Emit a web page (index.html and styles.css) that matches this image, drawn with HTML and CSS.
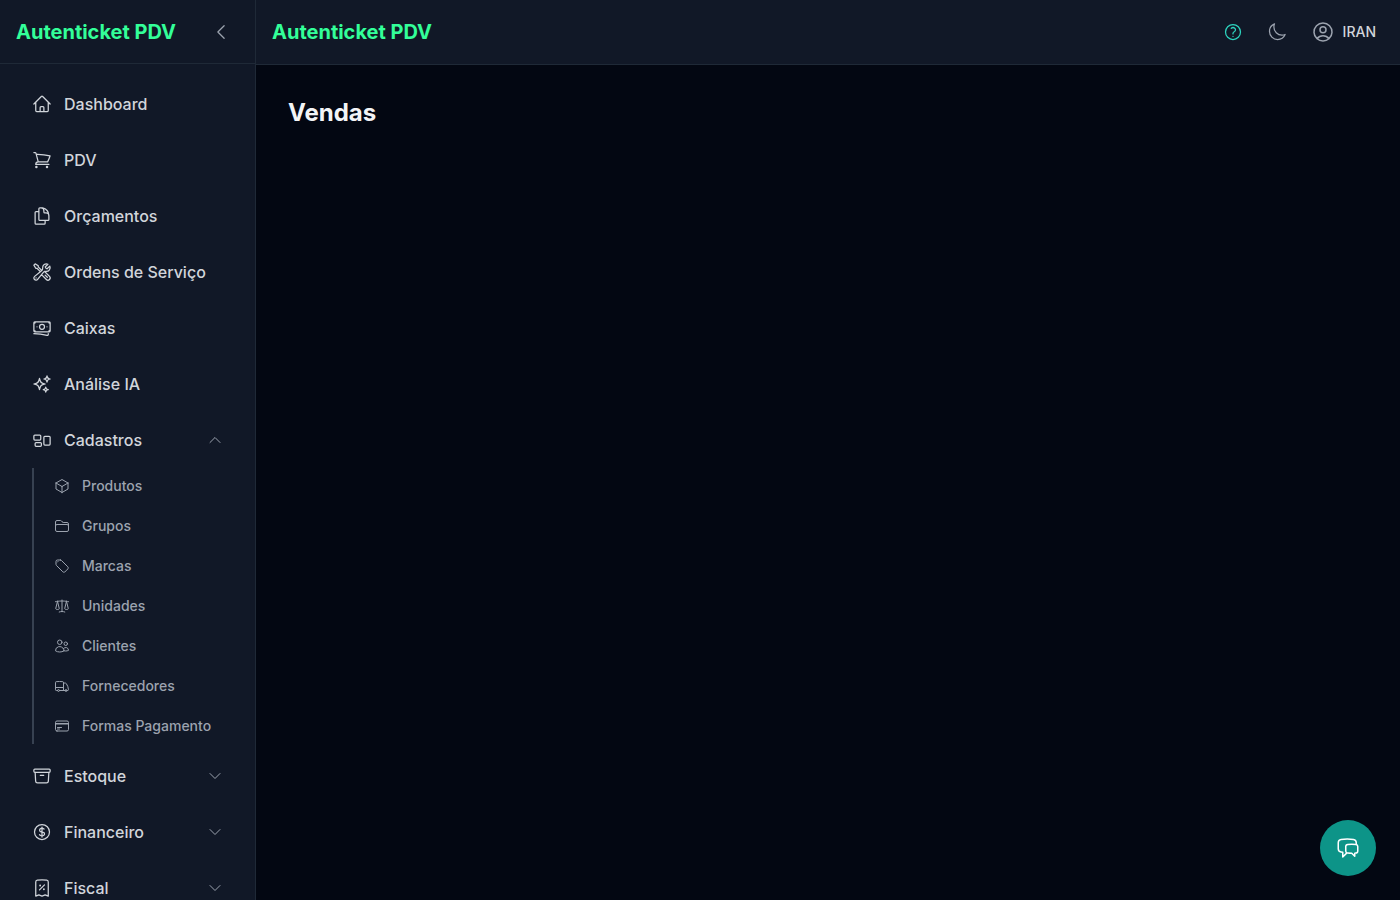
FILE: index.html
```html
<!DOCTYPE html>
<html lang="pt-BR">
<head>
    <meta charset="UTF-8">
    <meta name="viewport" content="width=device-width, initial-scale=1.0">
    <title>Vendas - Autenticket PDV</title>
    <link rel="stylesheet" href="styles.css">
</head>
<body>
    <div class="layout">
        <aside class="sidebar">
            <div class="sidebar-header">
                <a class="brand" href="#">Autenticket PDV</a>
                <button class="icon-button" type="button" aria-label="Recolher menu">
                    <svg class="icon" viewBox="0 0 24 24"><path d="M15.75 19.5 8.25 12l7.5-7.5"/></svg>
                </button>
            </div>
            <nav class="sidebar-nav">
                <a class="nav-item" href="#">
                    <svg class="icon" viewBox="0 0 24 24"><path d="m2.25 12 8.954-8.955c.44-.439 1.152-.439 1.591 0L21.75 12M4.5 9.75v10.125c0 .621.504 1.125 1.125 1.125H9.75v-4.875c0-.621.504-1.125 1.125-1.125h2.25c.621 0 1.125.504 1.125 1.125V21h4.125c.621 0 1.125-.504 1.125-1.125V9.75M8.25 21h8.25"/></svg>
                    <span>Dashboard</span>
                </a>
                <a class="nav-item" href="#">
                    <svg class="icon" viewBox="0 0 24 24"><path d="M2.25 3h1.386c.51 0 .955.343 1.087.835l.383 1.437M7.5 14.25a3 3 0 0 0-3 3h15.75m-12.75-3h11.218c1.121-2.3 2.1-4.684 2.924-7.138a60.114 60.114 0 0 0-16.536-1.84M7.5 14.25 5.106 5.272M6 20.25a.75.75 0 1 1-1.5 0 .75.75 0 0 1 1.5 0Zm12.75 0a.75.75 0 1 1-1.5 0 .75.75 0 0 1 1.5 0Z"/></svg>
                    <span>PDV</span>
                </a>
                <a class="nav-item" href="#">
                    <svg class="icon" viewBox="0 0 24 24"><path d="M15.75 17.25v3.375c0 .621-.504 1.125-1.125 1.125h-9.75a1.125 1.125 0 0 1-1.125-1.125V7.875c0-.621.504-1.125 1.125-1.125H6.75a9.06 9.06 0 0 1 1.5.124m7.5 10.376h3.375c.621 0 1.125-.504 1.125-1.125V11.25c0-4.46-3.243-8.161-7.5-8.876a9.06 9.06 0 0 0-1.5-.124H9.375c-.621 0-1.125.504-1.125 1.125v3.5m7.5 10.375H9.375a1.125 1.125 0 0 1-1.125-1.125v-9.25m12 6.625v-1.875a3.375 3.375 0 0 0-3.375-3.375h-1.5a1.125 1.125 0 0 1-1.125-1.125v-1.5a3.375 3.375 0 0 0-3.375-3.375H9.75"/></svg>
                    <span>Orçamentos</span>
                </a>
                <a class="nav-item" href="#">
                    <svg class="icon" viewBox="0 0 24 24"><path d="M11.42 15.17 17.25 21A2.652 2.652 0 0 0 21 17.25l-5.877-5.877M11.42 15.17l2.496-3.03c.317-.384.74-.626 1.208-.766M11.42 15.17l-4.655 5.653a2.548 2.548 0 1 1-3.586-3.586l6.837-5.63m5.108-.233c.55-.164 1.163-.188 1.743-.14a4.5 4.5 0 0 0 4.486-6.336l-3.276 3.277a3.004 3.004 0 0 1-2.25-2.25l3.276-3.276a4.5 4.5 0 0 0-6.336 4.486c.091 1.076-.071 2.264-.904 2.95l-.102.085m-1.745 1.437L5.909 7.5H4.5L2.25 3.75l1.5-1.5L7.5 4.5v1.409l4.26 4.26m-1.745 1.437 1.745-1.437m6.615 8.206L15.75 15.75M4.867 19.125h.008v.008h-.008v-.008Z"/></svg>
                    <span>Ordens de Serviço</span>
                </a>
                <a class="nav-item" href="#">
                    <svg class="icon" viewBox="0 0 24 24"><path d="M2.25 18.75a60.07 60.07 0 0 1 15.797 2.101c.727.198 1.453-.342 1.453-1.096V18.75M3.75 4.5v.75A.75.75 0 0 1 3 6h-.75m0 0v-.375c0-.621.504-1.125 1.125-1.125H20.25M2.25 6v9m18-10.5v.75c0 .414.336.75.75.75h.75m-1.5-1.5h.375c.621 0 1.125.504 1.125 1.125v9.75c0 .621-.504 1.125-1.125 1.125h-.375m1.5-1.5H21a.75.75 0 0 0-.75.75v.75m0 0H3.75m0 0h-.375a1.125 1.125 0 0 1-1.125-1.125V15m1.5 1.5v-.75A.75.75 0 0 0 3 15h-.75M15 10.5a3 3 0 1 1-6 0 3 3 0 0 1 6 0Zm3 0h.008v.008H18V10.5Zm-12 0h.008v.008H6V10.5Z"/></svg>
                    <span>Caixas</span>
                </a>
                <a class="nav-item" href="#">
                    <svg class="icon" viewBox="0 0 24 24"><path d="M9.813 15.904 9 18.75l-.813-2.846a4.5 4.5 0 0 0-3.09-3.09L2.25 12l2.846-.813a4.5 4.5 0 0 0 3.09-3.09L9 5.25l.813 2.846a4.5 4.5 0 0 0 3.09 3.09L15.75 12l-2.846.813a4.5 4.5 0 0 0-3.09 3.09ZM18.259 8.715 18 9.75l-.259-1.035a3.375 3.375 0 0 0-2.455-2.456L14.25 6l1.036-.259a3.375 3.375 0 0 0 2.455-2.456L18 2.25l.259 1.035a3.375 3.375 0 0 0 2.456 2.456L21.75 6l-1.035.259a3.375 3.375 0 0 0-2.456 2.456ZM16.894 20.567 16.5 21.75l-.394-1.183a2.25 2.25 0 0 0-1.423-1.423L13.5 18.75l1.183-.394a2.25 2.25 0 0 0 1.423-1.423l.394-1.183.394 1.183a2.25 2.25 0 0 0 1.423 1.423l1.183.394-1.183.394a2.25 2.25 0 0 0-1.423 1.423Z"/></svg>
                    <span>Análise IA</span>
                </a>
                <div class="nav-group">
                    <button class="nav-item" type="button" aria-expanded="true" aria-controls="menu-cadastros">
                        <svg class="icon" viewBox="0 0 24 24"><path d="M2.25 7.125C2.25 6.504 2.754 6 3.375 6h6c.621 0 1.125.504 1.125 1.125v3.75c0 .621-.504 1.125-1.125 1.125h-6a1.125 1.125 0 0 1-1.125-1.125v-3.75ZM14.25 8.625c0-.621.504-1.125 1.125-1.125h5.25c.621 0 1.125.504 1.125 1.125v8.25c0 .621-.504 1.125-1.125 1.125h-5.25a1.125 1.125 0 0 1-1.125-1.125v-8.25ZM3.75 16.125c0-.621.504-1.125 1.125-1.125h5.25c.621 0 1.125.504 1.125 1.125v2.25c0 .621-.504 1.125-1.125 1.125h-5.25a1.125 1.125 0 0 1-1.125-1.125v-2.25Z"/></svg>
                        <span>Cadastros</span>
                        <svg class="icon chevron" viewBox="0 0 24 24"><path d="m4.5 15.75 7.5-7.5 7.5 7.5"/></svg>
                    </button>
                    <div class="submenu" id="menu-cadastros">
                        <a class="submenu-item" href="#">
                            <svg class="icon" viewBox="0 0 24 24"><path d="m21 7.5-9-5.25L3 7.5m18 0-9 5.25m9-5.25v9l-9 5.25M3 7.5l9 5.25M3 7.5v9l9 5.25m0-9v9"/></svg>
                            <span>Produtos</span>
                        </a>
                        <a class="submenu-item" href="#">
                            <svg class="icon" viewBox="0 0 24 24"><path d="M2.25 12.75V12A2.25 2.25 0 0 1 4.5 9.75h15A2.25 2.25 0 0 1 21.75 12v.75m-8.69-6.44-2.12-2.12a1.5 1.5 0 0 0-1.061-.44H4.5A2.25 2.25 0 0 0 2.25 6v12a2.25 2.25 0 0 0 2.25 2.25h15A2.25 2.25 0 0 0 21.75 18V9a2.25 2.25 0 0 0-2.25-2.25h-5.379a1.5 1.5 0 0 1-1.06-.44Z"/></svg>
                            <span>Grupos</span>
                        </a>
                        <a class="submenu-item" href="#">
                            <svg class="icon" viewBox="0 0 24 24"><path d="M9.568 3H5.25A2.25 2.25 0 0 0 3 5.25v4.318c0 .597.237 1.17.659 1.591l9.581 9.581c.699.699 1.78.872 2.607.33a18.095 18.095 0 0 0 5.223-5.223c.542-.827.369-1.908-.33-2.607L11.16 3.66A2.25 2.25 0 0 0 9.568 3Z"/><path d="M6 6h.008v.008H6V6Z"/></svg>
                            <span>Marcas</span>
                        </a>
                        <a class="submenu-item" href="#">
                            <svg class="icon" viewBox="0 0 24 24"><path d="M12 3v17.25m0 0c-1.472 0-2.882.265-4.185.75M12 20.25c1.472 0 2.882.265 4.185.75M18.75 4.97A48.416 48.416 0 0 0 12 4.5c-2.291 0-4.545.16-6.75.47m13.5 0c1.01.143 2.01.317 3 .52m-3-.52 2.62 10.726c.122.499-.106 1.028-.589 1.202a5.988 5.988 0 0 1-2.031.352 5.988 5.988 0 0 1-2.031-.352c-.483-.174-.711-.703-.59-1.202L18.75 4.971Zm-16.5.52c.99-.203 1.99-.377 3-.52m0 0 2.62 10.726c.122.499-.106 1.028-.589 1.202a5.989 5.989 0 0 1-2.031.352 5.989 5.989 0 0 1-2.031-.352c-.483-.174-.711-.703-.59-1.202L5.25 4.971Z"/></svg>
                            <span>Unidades</span>
                        </a>
                        <a class="submenu-item" href="#">
                            <svg class="icon" viewBox="0 0 24 24"><path d="M15 19.128a9.38 9.38 0 0 0 2.625.372 9.337 9.337 0 0 0 4.121-.952 4.125 4.125 0 0 0-7.533-2.493M15 19.128v-.003c0-1.113-.285-2.16-.786-3.07M15 19.128v.106A12.318 12.318 0 0 1 8.624 21c-2.331 0-4.512-.645-6.374-1.766l-.001-.109a6.375 6.375 0 0 1 11.964-3.07M12 6.375a3.375 3.375 0 1 1-6.75 0 3.375 3.375 0 0 1 6.75 0Zm8.25 2.25a2.625 2.625 0 1 1-5.25 0 2.625 2.625 0 0 1 5.25 0Z"/></svg>
                            <span>Clientes</span>
                        </a>
                        <a class="submenu-item" href="#">
                            <svg class="icon" viewBox="0 0 24 24"><path d="M8.25 18.75a1.5 1.5 0 0 1-3 0m3 0a1.5 1.5 0 0 0-3 0m3 0h6m-9 0H3.375a1.125 1.125 0 0 1-1.125-1.125V14.25m17.25 4.5a1.5 1.5 0 0 1-3 0m3 0a1.5 1.5 0 0 0-3 0m3 0h1.125c.621 0 1.129-.504 1.09-1.124a17.902 17.902 0 0 0-3.213-9.193 2.056 2.056 0 0 0-1.58-.86H14.25M16.5 18.75h-2.25m0-11.177v-.958c0-.568-.422-1.048-.987-1.106a48.554 48.554 0 0 0-10.026 0 1.106 1.106 0 0 0-.987 1.106v7.635m12-6.677v6.677m0 4.5v-4.5m0 0h-12"/></svg>
                            <span>Fornecedores</span>
                        </a>
                        <a class="submenu-item" href="#">
                            <svg class="icon" viewBox="0 0 24 24"><path d="M2.25 8.25h19.5M2.25 9h19.5m-16.5 5.25h6m-6 2.25h3m-3.75 3h15a2.25 2.25 0 0 0 2.25-2.25V6.75A2.25 2.25 0 0 0 19.5 4.5h-15a2.25 2.25 0 0 0-2.25 2.25v10.5A2.25 2.25 0 0 0 4.5 19.5Z"/></svg>
                            <span>Formas Pagamento</span>
                        </a>
                    </div>
                </div>
                <button class="nav-item" type="button" aria-expanded="false">
                    <svg class="icon" viewBox="0 0 24 24"><path d="m20.25 7.5-.625 10.632a2.25 2.25 0 0 1-2.247 2.118H6.622a2.25 2.25 0 0 1-2.247-2.118L3.75 7.5M10 11.25h4M3.375 7.5h17.25c.621 0 1.125-.504 1.125-1.125v-1.5c0-.621-.504-1.125-1.125-1.125H3.375c-.621 0-1.125.504-1.125 1.125v1.5c0 .621.504 1.125 1.125 1.125Z"/></svg>
                    <span>Estoque</span>
                    <svg class="icon chevron" viewBox="0 0 24 24"><path d="m19.5 8.25-7.5 7.5-7.5-7.5"/></svg>
                </button>
                <button class="nav-item" type="button" aria-expanded="false">
                    <svg class="icon" viewBox="0 0 24 24"><path d="M12 6v12m-3-2.818.879.659c1.171.879 3.07.879 4.242 0 1.172-.879 1.172-2.303 0-3.182C13.536 12.219 12.768 12 12 12c-.725 0-1.45-.22-2.003-.659-1.106-.879-1.106-2.303 0-3.182s2.9-.879 4.006 0l.415.33M21 12a9 9 0 1 1-18 0 9 9 0 0 1 18 0Z"/></svg>
                    <span>Financeiro</span>
                    <svg class="icon chevron" viewBox="0 0 24 24"><path d="m19.5 8.25-7.5 7.5-7.5-7.5"/></svg>
                </button>
                <button class="nav-item" type="button" aria-expanded="false">
                    <svg class="icon" viewBox="0 0 24 24"><path d="m9 14.25 6-6m4.5-3.493V21.75l-3.75-1.5-3.75 1.5-3.75-1.5-3.75 1.5V4.757c0-1.108.806-2.057 1.907-2.185a48.507 48.507 0 0 1 11.186 0c1.1.128 1.907 1.077 1.907 2.185ZM9.75 9h.008v.008H9.75V9Zm.375 0a.375.375 0 1 1-.75 0 .375.375 0 0 1 .75 0Zm4.125 4.5h.008v.008h-.008V13.5Zm.375 0a.375.375 0 1 1-.75 0 .375.375 0 0 1 .75 0Z"/></svg>
                    <span>Fiscal</span>
                    <svg class="icon chevron" viewBox="0 0 24 24"><path d="m19.5 8.25-7.5 7.5-7.5-7.5"/></svg>
                </button>
            </nav>
        </aside>

        <div class="page">
            <header class="topbar">
                <a class="brand" href="#">Autenticket PDV</a>
                <div class="topbar-actions">
                    <button class="icon-button help" type="button" aria-label="Ajuda">
                        <svg class="icon" viewBox="0 0 24 24"><path d="M9.879 7.519c1.171-1.025 3.071-1.025 4.242 0 1.172 1.025 1.172 2.687 0 3.712-.203.179-.43.326-.67.442-.745.361-1.45.999-1.45 1.827v.75M21 12a9 9 0 1 1-18 0 9 9 0 0 1 18 0Zm-9 5.25h.008v.008H12v-.008Z"/></svg>
                    </button>
                    <button class="icon-button" type="button" aria-label="Alternar tema">
                        <svg class="icon" viewBox="0 0 24 24"><path d="M21.752 15.002A9.72 9.72 0 0 1 18 15.75c-5.385 0-9.75-4.365-9.75-9.75 0-1.33.266-2.597.748-3.752A9.753 9.753 0 0 0 3 11.25C3 16.635 7.365 21 12.75 21a9.753 9.753 0 0 0 9.002-5.998Z"/></svg>
                    </button>
                    <button class="user-button" type="button">
                        <svg class="icon" viewBox="0 0 24 24"><path d="M17.982 18.725A7.488 7.488 0 0 0 12 15.75a7.488 7.488 0 0 0-5.982 2.975m11.963 0a9 9 0 1 0-11.963 0m11.963 0A8.966 8.966 0 0 1 12 21a8.966 8.966 0 0 1-5.982-2.275M15 9.75a3 3 0 1 1-6 0 3 3 0 0 1 6 0Z"/></svg>
                        <span>IRAN</span>
                    </button>
                </div>
            </header>
            <main class="content">
                <h1>Vendas</h1>
            </main>
        </div>
    </div>

    <button class="chat-button" type="button" aria-label="Abrir chat">
        <svg class="icon" viewBox="0 0 24 24"><path d="M20.25 8.511c.884.284 1.5 1.128 1.5 2.097v4.286c0 1.136-.847 2.1-1.98 2.193-.34.027-.68.052-1.02.072v3.091l-3-3c-1.354 0-2.694-.055-4.02-.163a2.115 2.115 0 0 1-.825-.242m9.345-8.334a2.126 2.126 0 0 0-.476-.095 48.64 48.64 0 0 0-8.048 0c-1.131.094-1.976 1.057-1.976 2.192v4.286c0 .837.46 1.58 1.155 1.951m9.345-8.334V6.637c0-1.621-1.152-3.026-2.76-3.235A48.455 48.455 0 0 0 11.25 3c-2.115 0-4.198.137-6.24.402-1.608.209-2.76 1.614-2.76 3.235v6.226c0 1.621 1.152 3.026 2.76 3.235.577.075 1.157.14 1.74.194V21l4.155-4.155"/></svg>
    </button>
</body>
</html>
```

FILE: styles.css
```css
* {
    box-sizing: border-box;
}
body {
    margin: 0;
    font-family: Inter, 'Segoe UI', Roboto, sans-serif;
    font-size: 16px;
    line-height: 24px;
    color: #f3f4f6;
    background-color: #030712;
}
a {
    color: inherit;
    text-decoration: none;
}
button {
    padding: 0;
    font: inherit;
    color: inherit;
    background: none;
    border: none;
    cursor: pointer;
}
.icon {
    display: block;
    flex-shrink: 0;
    width: 20px;
    height: 20px;
    fill: none;
    stroke: currentColor;
    stroke-width: 1.5;
    stroke-linecap: round;
    stroke-linejoin: round;
}
.layout {
    display: flex;
    height: 100vh;
    overflow: hidden;
}
.brand {
    font-size: 20px;
    line-height: 28px;
    font-weight: 700;
    color: #33ff99;
}

/* Sidebar */
.sidebar {
    display: flex;
    flex-direction: column;
    flex-shrink: 0;
    width: 256px;
    background-color: #111827;
    border-right: 1px solid #1f2937;
}
.sidebar-header {
    display: flex;
    flex-shrink: 0;
    align-items: center;
    justify-content: space-between;
    height: 64px;
    padding: 0 16px;
    border-bottom: 1px solid #1f2937;
}
.icon-button {
    padding: 8px;
    color: #9ca3af;
}
.sidebar-nav {
    display: flex;
    flex-direction: column;
    flex: 1;
    gap: 8px;
    padding: 16px;
    overflow-y: auto;
    scrollbar-width: none;
}
.nav-item {
    display: flex;
    flex-shrink: 0;
    align-items: center;
    gap: 12px;
    width: 100%;
    padding: 12px 16px;
    font-weight: 500;
    color: #d1d5db;
    text-align: left;
    border-radius: 8px;
}
.nav-item:hover {
    background-color: #1f2937;
}
.chevron {
    width: 16px;
    height: 16px;
    margin-left: auto;
    color: #9ca3af;
}
.submenu {
    display: flex;
    flex-direction: column;
    gap: 4px;
    margin: 4px 0 0 16px;
    padding-left: 8px;
    border-left: 2px solid #374151;
}
.submenu-item {
    display: flex;
    align-items: center;
    gap: 12px;
    padding: 8px 12px;
    font-size: 14px;
    line-height: 20px;
    font-weight: 500;
    color: #9ca3af;
    border-radius: 6px;
}
.submenu-item:hover {
    background-color: #1f2937;
}
.submenu-item .icon {
    width: 16px;
    height: 16px;
}

/* Page */
.page {
    display: flex;
    flex-direction: column;
    flex: 1;
    min-width: 0;
}
.topbar {
    display: flex;
    align-items: center;
    justify-content: space-between;
    padding: 14px 24px 14px 16px;
    background-color: #111827;
    border-bottom: 1px solid #1f2937;
}
.topbar-actions {
    display: flex;
    align-items: center;
    gap: 8px;
}
.help {
    color: #2dd4bf;
}
.user-button {
    display: flex;
    align-items: center;
    gap: 8px;
    margin-left: 8px;
    font-size: 14px;
    line-height: 20px;
    font-weight: 500;
    color: #d1d5db;
}
.user-button .icon {
    width: 24px;
    height: 24px;
    color: #9ca3af;
}
.content {
    flex: 1;
    padding: 32px;
    overflow-y: auto;
}
.content h1 {
    margin: 0;
    font-size: 24px;
    line-height: 32px;
    font-weight: 700;
}

/* Floating chat button */
.chat-button {
    position: fixed;
    right: 24px;
    bottom: 24px;
    display: flex;
    align-items: center;
    justify-content: center;
    width: 56px;
    height: 56px;
    color: #fff;
    background-color: #0d9488;
    border-radius: 50%;
}
.chat-button .icon {
    width: 24px;
    height: 24px;
}
```
